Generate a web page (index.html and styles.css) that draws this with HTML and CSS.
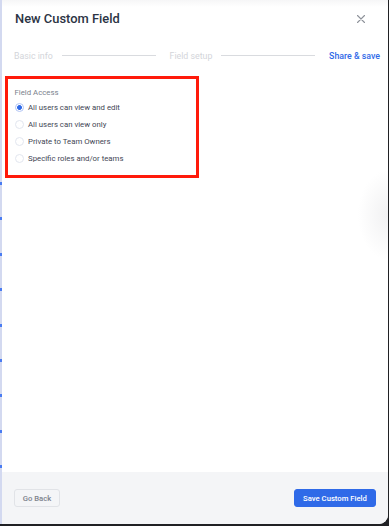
FILE: index.html
```html
<!DOCTYPE html>
<html>
<head>
<meta charset="utf-8">
<link rel="stylesheet" href="styles.css">
</head>
<body>
<div class="screen">
  <div class="edge"><span></span><span></span><span></span><span></span><span></span><span></span><span></span><span></span><span></span></div>
  <div class="modal">
    <div class="header">
      <h1 class="title">New Custom Field</h1>
      <svg class="close" width="8" height="8" viewBox="0 0 8 8"><path d="M0.5 0.5L7.5 7.5M7.5 0.5L0.5 7.5" stroke="#8e929a" stroke-width="1.1" stroke-linecap="round"/></svg>
    </div>
    <div class="steps">
      <span class="step">Basic info</span>
      <span class="line"></span>
      <span class="step">Field setup</span>
      <span class="line"></span>
      <span class="step active">Share &amp; save</span>
    </div>
    <div class="body">
      <div class="highlight">
        <div class="label">Field Access</div>
        <div class="options">
          <div class="option"><span class="radio checked"></span><span>All users can view and edit</span></div>
          <div class="option"><span class="radio"></span><span>All users can view only</span></div>
          <div class="option"><span class="radio"></span><span>Private to Team Owners</span></div>
          <div class="option"><span class="radio"></span><span>Specific roles and/or teams</span></div>
        </div>
      </div>
    </div>
    <div class="footer">
      <button class="btn secondary">Go Back</button>
      <button class="btn primary">Save Custom Field</button>
    </div>
  </div>
</div>
</body>
</html>
```
FILE: styles.css
```css
* { box-sizing: border-box; }
html, body { margin: 0; padding: 0; }
body {
  width: 389px;
  height: 526px;
  overflow: hidden;
  background: #202124;
  font-family: "Roboto", sans-serif;
}
.screen {
  display: flex;
  height: 524px;
}
.edge {
  width: 2px;
  flex: none;
  background: #d3d9f0;
  display: flex;
  flex-direction: column;
  gap: 32.4px;
  padding-top: 182px;
}
.edge span {
  display: block;
  width: 1.5px;
  height: 3px;
  background: #4a7cf2;
}
.modal {
  flex: 1;
  display: flex;
  flex-direction: column;
  background: #ffffff;
  border-bottom-right-radius: 9px;
  overflow: hidden;
  margin-right: 1px;
  background-image: radial-gradient(ellipse 30px 45px at 100% 215px, #f1f1f2, rgba(255,255,255,0));
}
.header {
  display: flex;
  align-items: center;
  justify-content: space-between;
  padding: 11px 23px 0 13px;
  background: linear-gradient(#f6f6f7 0, rgba(255,255,255,0) 7px);
}
.title {
  margin: 0;
  font-size: 12.9px;
  line-height: 16px;
  font-weight: 500;
  color: #2c3444;
}
.close { display: block; }
.steps {
  display: flex;
  align-items: center;
  padding: 0 8px 0 12px;
  margin-top: 22.5px;
  height: 12px;
}
.step {
  font-size: 8.8px;
  line-height: 12px;
  color: #d3d5da;
  white-space: nowrap;
}
.step.active {
  color: #2f6ae8;
  font-weight: 500;
}
.line {
  flex: 1;
  height: 1px;
  background: #d9dbdf;
  margin: 0 14px 0 9px;
}
.body {
  flex: 1;
  padding: 14.5px 0 0 3px;
}
.highlight {
  width: 194px;
  border: 3.5px solid #ff1a0a;
  padding: 8.5px 0 11px 6.5px;
}
.label {
  font-size: 7.8px;
  line-height: 10px;
  color: #7a7f8c;
}
.options {
  display: flex;
  flex-direction: column;
  gap: 6px;
  margin-top: 4.8px;
}
.option {
  display: flex;
  align-items: center;
  gap: 4.5px;
  font-size: 7.8px;
  color: #3f4654;
  height: 11px;
}
.radio {
  width: 9px;
  height: 9px;
  border-radius: 50%;
  border: 1px solid #e2e6ef;
  background: #fff;
  flex: none;
}
.radio.checked {
  border-color: #b3c6f5;
  background: radial-gradient(circle, #2f6ae8 0 2.1px, #fff 2.7px);
}
.footer {
  height: 52px;
  flex: none;
  background: #f4f5f7;
  display: flex;
  align-items: center;
  justify-content: space-between;
  padding: 0 12px;
}
.btn {
  font-family: "Roboto", sans-serif;
  font-size: 7.7px;
  font-weight: 500;
  height: 18px;
  padding: 0;
  border-radius: 3px;
  white-space: nowrap;
  cursor: pointer;
}
.btn.secondary {
  width: 46px;
  background: #f4f5f7;
  border: 1px solid #e1e3e7;
  color: #7d828c;
}
.btn.primary {
  width: 82px;
  background: #2f6ae8;
  border: 1px solid #2f6ae8;
  color: #ffffff;
}
```
